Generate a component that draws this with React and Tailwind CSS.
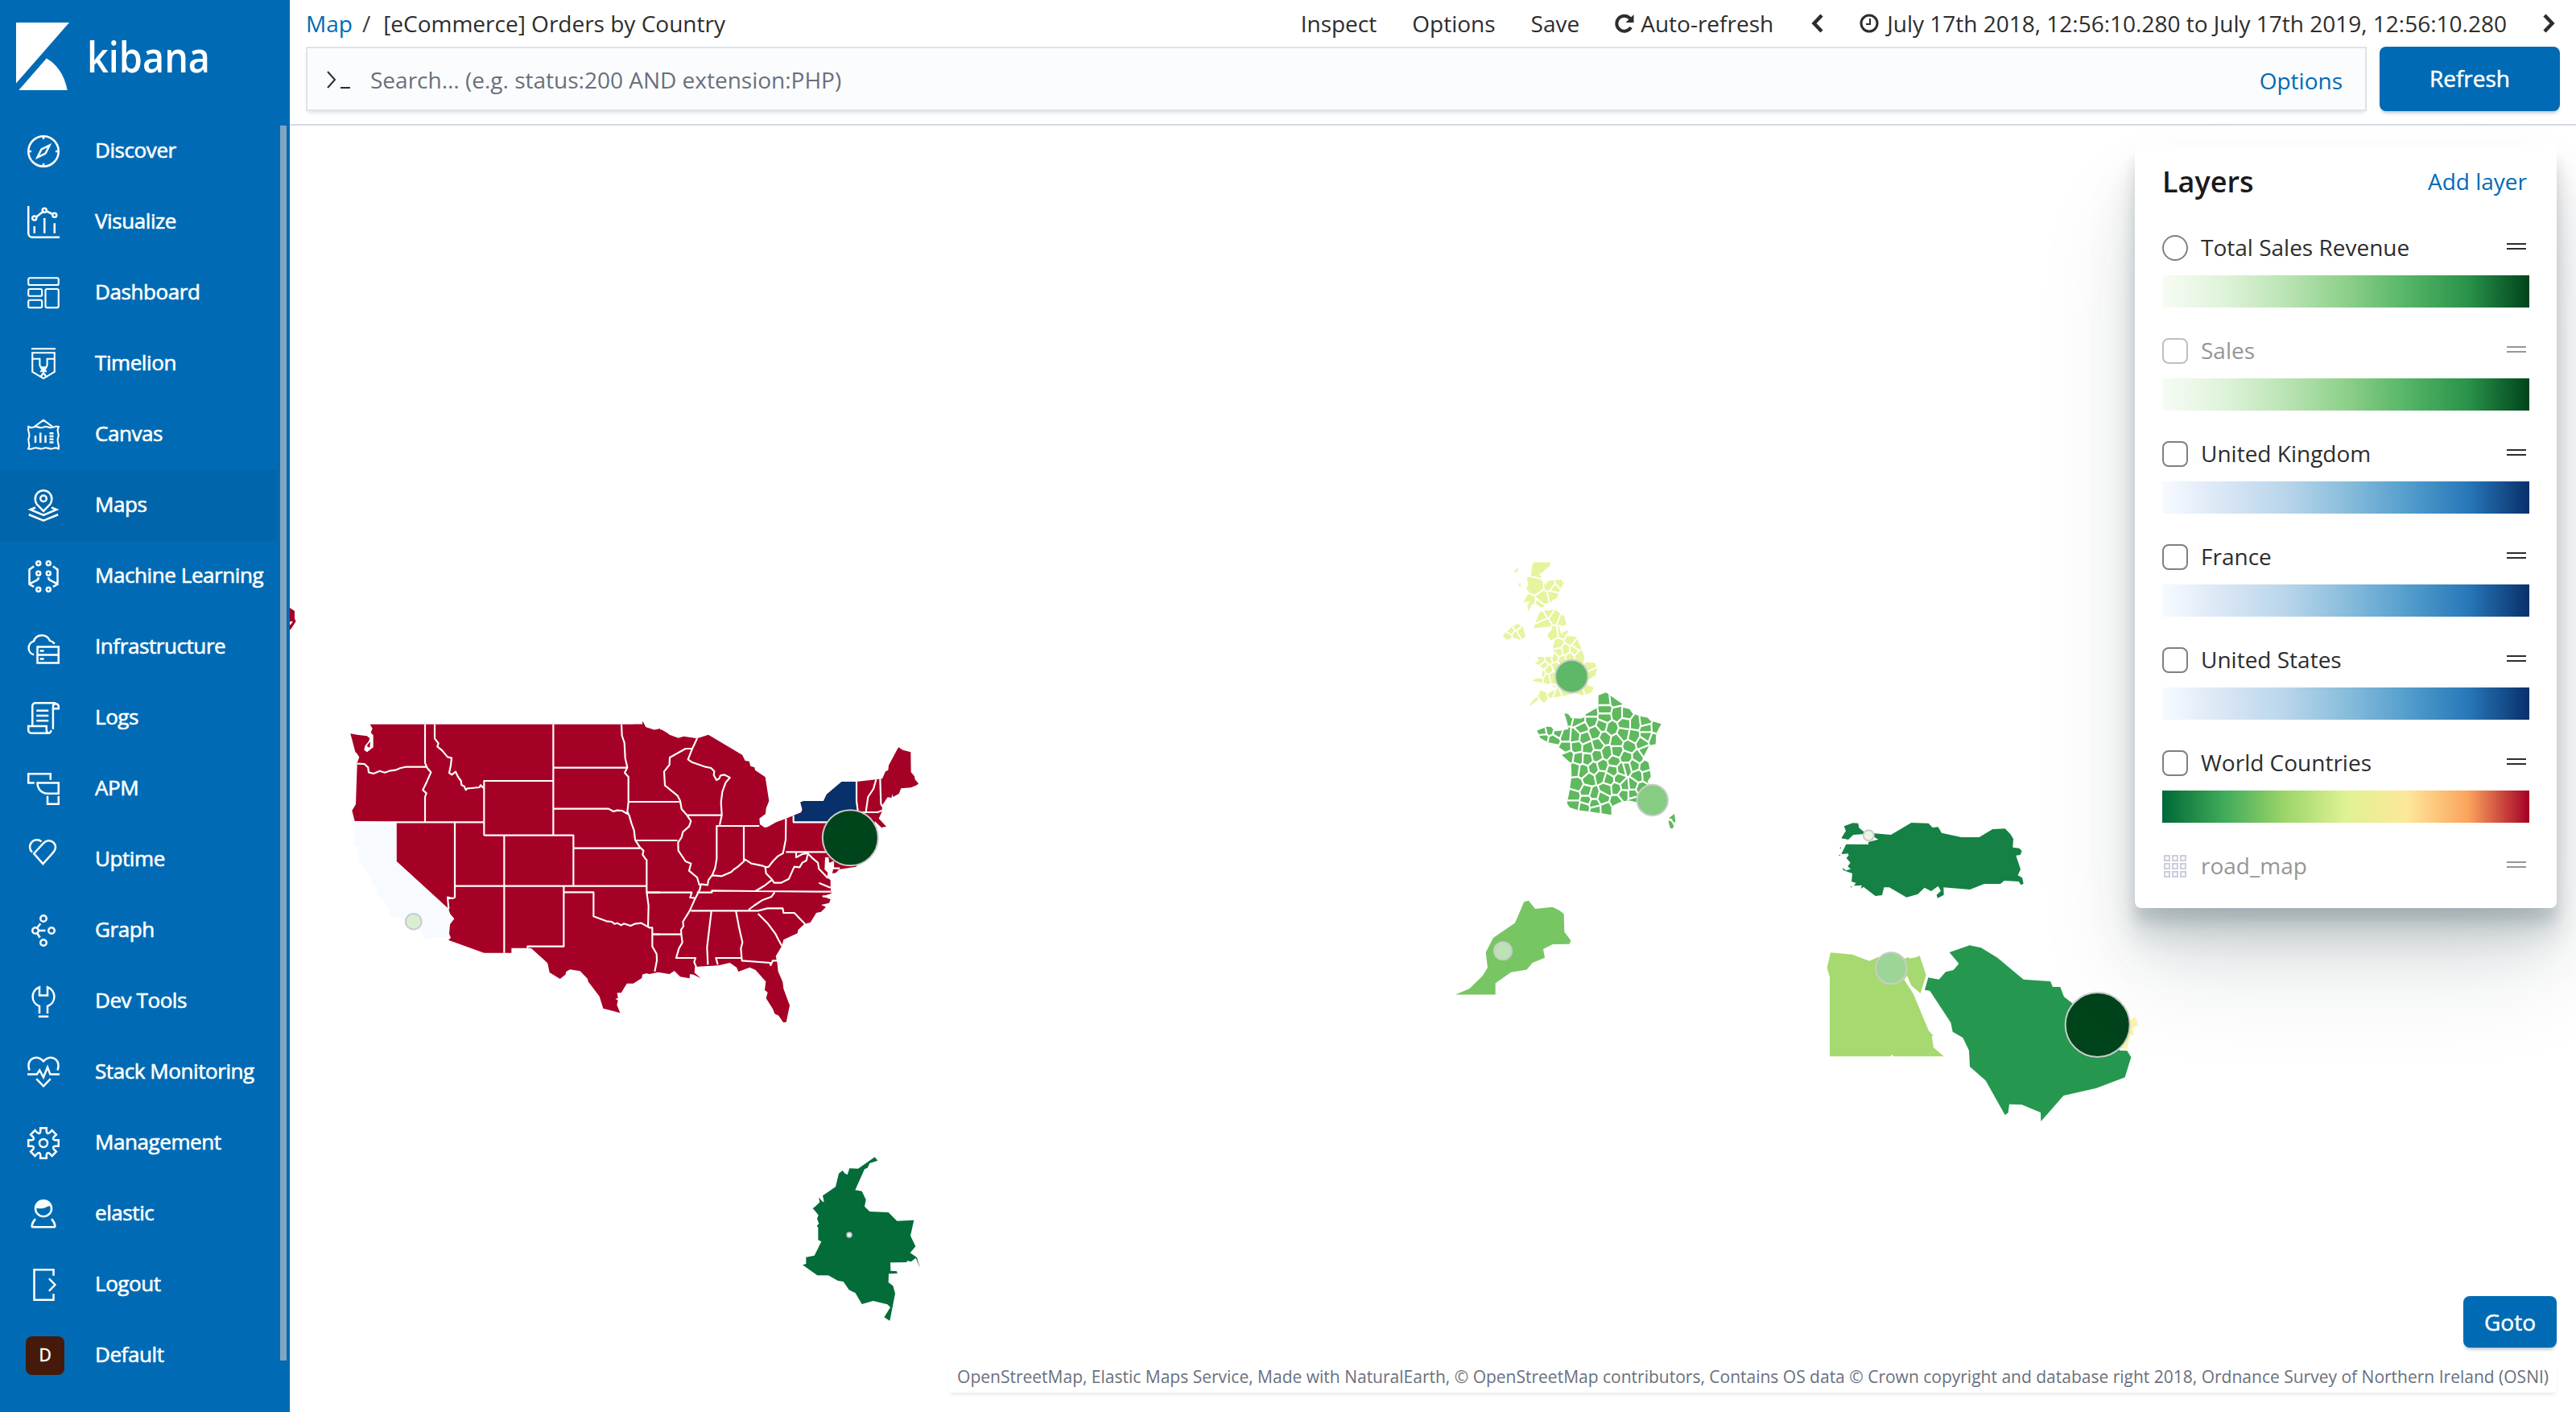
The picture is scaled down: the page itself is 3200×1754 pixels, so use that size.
import React from "react";

const FONT = "font-['Open_Sans','Noto_Sans',sans-serif]";

/* ---------- sidebar icons, 32 unit grid ---------- */

const gearPath = (() => {
  const pts = [];
  for (let i = 0; i < 8; i++) {
    const a = (i * Math.PI) / 4;
    const rot = (x, y) =>
      `${(16 + x * Math.cos(a) - y * Math.sin(a)).toFixed(2)} ${(16 + x * Math.sin(a) + y * Math.cos(a)).toFixed(2)}`;
    pts.push(`${i ? "L" : "M"}${rot(-3, -11.6)}L${rot(-3, -15)}L${rot(3, -15)}L${rot(3, -11.6)}`);
    const b = a + Math.PI / 8;
    const c = a + Math.PI / 4;
    const qx = 16 + 9.2 * Math.sin(b);
    const qy = 16 - 9.2 * Math.cos(b);
    const ex = 16 - 3 * Math.cos(c) + 11.6 * Math.sin(c);
    const ey = 16 - 3 * Math.sin(c) - 11.6 * Math.cos(c);
    pts.push(`Q${qx.toFixed(2)} ${qy.toFixed(2)} ${ex.toFixed(2)} ${ey.toFixed(2)}`);
  }
  return pts.join("") + "Z";
})();

const ICONS = {
  Discover: (
    <>
      <circle cx="16" cy="16" r="15" />
      <path d="M16 1v3M16 28v3M1 16h3M28 16h3M22 10l-8 4-4 8 8-4z" />
    </>
  ),
  Visualize: (
    <>
      <path d="M1 0v27a4 4 0 004 4h27M7 20v7M17 12v15M27 17v10M8.8 10.8l6.4-5M18.9 5l6.2 3" />
      <circle cx="7" cy="12" r="2" />
      <circle cx="17" cy="4.2" r="2" />
      <circle cx="27" cy="9" r="2" />
    </>
  ),
  Dashboard: (
    <g strokeWidth="1.7">
      <rect x="1" y="1" width="30" height="7" rx="1.5" />
      <rect x="1" y="12" width="13.5" height="7" rx="1.5" />
      <rect x="1" y="23" width="13.5" height="7.5" rx="1.5" />
      <rect x="18" y="12" width="13" height="18.5" rx="1.5" />
    </g>
  ),
  Timelion: (
    <g strokeWidth="1.7">
      <path d="M4 1h24M5 5h22v19l-11 6.5L5 24zM5 11h7.3v6.3l3.7 7 3.7-7V11H27M12.5 19.5h7M13 24l3-3 3 3M13 29l3-4 3 4" />
    </g>
  ),
  Canvas: (
    <g strokeWidth="1.7">
      <path d="M7 8l9-6.5L25 8M1 8q3 1.500 5 .5t5 0 5 0 5 0 5 0 5-.5q-1.500 3-.5 6t0 5 0 5 .5 6q-3-1.500-5-.5t-5 0-5 0-5 0-5 0-5 .5q1.500-3 .5-6t0-5 0-5-.5-6z" />
      <path strokeWidth="2" d="M8 17v7M13 14v10M18 16.500v7.500M22 14.500h4M22 17.500h4M22 20.500h4M22 23.500h4" />
    </g>
  ),
  Maps: (
    <>
      <path d="M16 21.5L9.500 14.800a8.200 8.200 0 01-1.700-5A8.200 8.200 0 0116 1a8.200 8.200 0 018.200 8.800 8.200 8.200 0 01-1.700 5z" />
      <circle cx="16" cy="9" r="3" />
      <path d="M8 18l-5 2 13 5.500L29 20l-5-2M1.500 25L16 31l14.500-6" />
    </>
  ),
  "Machine Learning": (
    <>
      <circle cx="11" cy="3" r="2" />
      <circle cx="21" cy="3" r="2" />
      <circle cx="11" cy="13" r="2" />
      <circle cx="21" cy="13" r="2" />
      <circle cx="11" cy="29" r="2" />
      <circle cx="21" cy="29" r="2" />
      <path d="M6.500 6L2 9.200v14.600l4.500 2.500M2 23.500l6-3q3-1 3.300-3.500M25.500 6L30 9.200v14.600l-4.500 2.500M30 23.500l-6-3q-3-1-3.300-3.500" />
    </>
  ),
  Infrastructure: (
    <path d="M6.500 23.500A7 7 0 016.300 10 8.500 8.500 0 0122.300 9.500Q25 10 27 12.500M10 15.500h21v16H10zM10 23.500h21M12.500 19.500h4M12.500 27.500h4" />
  ),
  Logs: (
    <path d="M5 23V4a3 3 0 013-3h20M23.500 28a2.700 2.700 0 01-3 3H4a3 3 0 01-3-3v-4h18v4a3 3 0 003 3M25.500 27V4a2.800 2.800 0 015.500 0v2.500h-5M9 8.500h12M9 13.500h12M9 18.500h12" />
  ),
  APM: <path d="M7 10H1V1h22v6M10 10h21v10.500H20C14 20.500 10 16 10 10zM20 23v8h11v-8" />,
  Uptime: (
    <path d="M6.500 9.800L16.200-.7a6.700 6.700 0 019.700-.5 6.700 6.700 0 010 9.700L15.500 20zM4.800 8.500A6.500 6.500 0 0114-2" />
  ),
  Graph: (
    <>
      <circle cx="16" cy="4" r="3" />
      <circle cx="8" cy="16" r="3" />
      <circle cx="24" cy="16" r="3" />
      <circle cx="16" cy="28" r="3" />
      <path d="M10 13l3-4M11 16h7M10 19l2.500 4" />
    </>
  ),
  "Dev Tools": <path d="M12 28v-7.300A10 10 0 0112 1.800V10h8V1.800a10 10 0 010 18.900V28M11 31h10" />,
  "Stack Monitoring": (
    <path d="M2 14Q-.5 7 4 3 10-1 16 5 22-1 28 3q4.500 4 2 11M0 18h9.500l2.700-4L16 21l4-10 2.700 7H32M9 22.500l7 7.300 7-7.300" />
  ),
  Management: (
    <>
      <path d={gearPath} />
      <circle cx="16" cy="16" r="4" />
    </>
  ),
  elastic: (
    <>
      <circle cx="16" cy="10.500" r="8" />
      <path d="M8 21Q5 24 4.500 28q0 1 1 1h21q1 0 1-1-.5-4-3.500-7" />
      <path fill="white" stroke="none" d="M7.500 10Q8.500 2 16 2q6 0 8 6-4 0-6 1.500-4 2-10.500.5z" />
    </>
  ),
  Logout: <path d="M26 7V1H6.800v30H26v-6M21.500 9.800l6 6.200-6 6.200" />,
};

const NAV = [
  "Discover", "Visualize", "Dashboard", "Timelion", "Canvas", "Maps",
  "Machine Learning", "Infrastructure", "Logs", "APM", "Uptime", "Graph",
  "Dev Tools", "Stack Monitoring", "Management", "elastic", "Logout", "Default",
];

function Sidebar() {
  return (
    <aside className="flex h-full w-[360px] shrink-0 flex-col bg-[#006bb4] text-white">
      <div className="flex h-36 shrink-0 items-start pl-5 pt-7">
        <svg width="66" height="84" viewBox="0 0 66 84" fill="white">
          <path d="M0 0h66L0 75.500zM3.300 84L37.800 44.500Q58 56 63.700 84z" />
        </svg>
        <span className="ml-[22px] mt-3 origin-left scale-x-[0.9] text-[52px] leading-[60px] font-semibold">
          kibana
        </span>
      </div>
      <div className="flex">
        <nav className="w-[344px]">
          {NAV.map((n) => (
            <a
              key={n}
              className={
                "flex h-[88px] items-center " + (n === "Maps" ? "bg-[#0065aa]" : "")
              }
            >
              {n === "Default" ? (
                <span className="ml-8 mr-[38px] flex size-12 items-center justify-center rounded-lg bg-[#461a0a] text-[21px] [-webkit-text-stroke:0.5px_white]">
                  D
                </span>
              ) : (
                <svg
                  className="ml-[34px] mr-11 size-10 overflow-visible"
                  viewBox="0 0 32 32"
                  fill="none"
                  stroke="white"
                  strokeWidth="2"
                >
                  {ICONS[n]}
                </svg>
              )}
              <span className="pb-1 text-[26px] tracking-[-0.42px] whitespace-nowrap [-webkit-text-stroke:0.6px_white]">
                {n}
              </span>
            </a>
          ))}
        </nav>
        <div className="ml-1 mt-3 h-[1534px] w-2 bg-[#80a5c1]" />
      </div>
    </aside>
  );
}

/* ---------- header ---------- */

function Header() {
  return (
    <header className="h-[156px] shrink-0 border-b-2 border-[#d3dae6] bg-white text-[28px] text-[#2d2d2d]">
      <div className="flex h-[58px] items-center pl-5 whitespace-nowrap">
        <a className="text-[#006bb4]">Map</a>
        <span className="mr-4 ml-3 text-[#3f3f3f]">/</span>
        <span>[eCommerce] Orders by Country</span>
        <div className="ml-auto flex items-center pr-6">
          <span className="mr-11">Inspect</span>
          <span className="mr-11">Options</span>
          <span className="mr-11">Save</span>
          <svg className="mr-2 size-6" viewBox="0 0 24 24" fill="none" stroke="currentColor" strokeWidth="4">
            <path d="M20 17A9.500 9.500 0 1119 6" />
            <path fill="currentColor" stroke="none" d="M23.500 1v10h-10z" />
          </svg>
          <span className="mr-[45px]">Auto-refresh</span>
          <svg className="mr-[42px] h-6 w-5" viewBox="0 0 20 24" fill="none" stroke="currentColor" strokeWidth="4.500">
            <path d="M15 2L5.500 12l9.500 10" />
          </svg>
          <svg className="mr-2.5 size-6" viewBox="0 0 24 24" fill="none" stroke="currentColor" strokeWidth="3">
            <circle cx="12" cy="12" r="10" />
            <path strokeWidth="2" d="M13 6v7H8" />
          </svg>
          <span className="mr-[42px]">July 17th 2018, 12:56:10.280 to July 17th 2019, 12:56:10.280</span>
          <svg className="h-6 w-5" viewBox="0 0 20 24" fill="none" stroke="currentColor" strokeWidth="4.500">
            <path d="M5 2l9.500 10L5 22" />
          </svg>
        </div>
      </div>
      <div className="flex gap-4 pl-5 pr-5">
        <div className="flex h-20 flex-1 items-center border-2 border-[#dfe2e6] bg-[#fbfcfd] px-6 shadow-[0_4px_4px_-2px_rgba(152,162,179,0.3)]">
          <svg className="mt-1 h-6 w-[30px]" viewBox="0 0 30 24" fill="none" stroke="#2d2d2d" strokeWidth="2">
            <path d="M1 1l9 10-9 10M17 21h12" />
          </svg>
          <span className="ml-6 pt-0.5 text-[#69707d]">Search... (e.g. status:200 AND extension:PHP)</span>
          <a className="mr-1 ml-auto pt-1 text-[#006bb4]">Options</a>
        </div>
        <button className="h-20 w-56 rounded-lg bg-[#006bb4] pb-0.5 text-white shadow-[0_4px_4px_-2px_rgba(54,97,126,0.4)] [-webkit-text-stroke:0.5px_white]">
          Refresh
        </button>
      </div>
    </header>
  );
}

/* ---------- map shapes ---------- */

// Voronoi cell outlines, used for the department and district borders.
function cellPath(sites) {
  let out = "";
  sites.forEach(([sx, sy], i) => {
    let poly = [[sx - 120, sy - 120], [sx + 120, sy - 120], [sx + 120, sy + 120], [sx - 120, sy + 120]];
    sites.forEach(([tx, ty], j) => {
      if (i === j) return;
      const mx = (sx + tx) / 2, my = (sy + ty) / 2, nx = tx - sx, ny = ty - sy;
      const side = ([x, y]) => (x - mx) * nx + (y - my) * ny;
      const next = [];
      poly.forEach((p, k) => {
        const q = poly[(k + 1) % poly.length];
        const a = side(p), b = side(q);
        if (a <= 0) next.push(p);
        if ((a < 0 && b > 0) || (a > 0 && b < 0)) {
          const t = a / (a - b);
          next.push([p[0] + t * (q[0] - p[0]), p[1] + t * (q[1] - p[1])]);
        }
      });
      poly = next;
    });
    if (poly.length) out += "M" + poly.map((p) => `${p[0].toFixed(1)} ${p[1].toFixed(1)}`).join("L") + "Z";
  });
  return out;
}

const FR = [[640,515],[680,510],[640,545],[690,560],[720,560],[640,570],[755,590],[790,585],[715,590],[665,608],[630,598],[590,582],[545,582],[500,570],[555,605],[605,622],[640,640],[685,650],[710,627],[748,635],[795,608],[835,605],[795,632],[825,645],[780,657],[732,668],[790,685],[765,705],[720,705],[685,685],[648,690],[675,718],[612,700],[615,662],[578,673],[565,640],[530,635],[495,632],[450,648],[410,640],[435,612],[408,618],[465,620],[535,670],[495,672],[505,702],[542,708],[575,710],[600,742],[560,750],[530,745],[630,733],[670,750],[705,745],[722,740],[750,732],[790,737],[798,765],[763,768],[745,797],[715,800],[695,778],[655,778],[625,768],[582,778],[535,797],[645,812],[685,808],[712,830],[745,830],[775,810],[600,830],[632,840],[685,855],[572,848],[525,835],[572,820],[525,865],[565,873],[605,882],[645,880],[750,850],[600,860],[590,555]];
const UK = [[395,75],[385,130],[440,125],[470,120],[455,137],[410,172],[450,162],[365,190],[395,195],[415,258],[455,232],[485,245],[450,290],[405,232],[430,215],[480,285],[515,310],[465,325],[535,328],[545,368],[405,380],[430,375],[455,370],[480,378],[510,368],[495,345],[590,400],[598,420],[430,410],[405,425],[445,435],[395,445],[410,495],[380,520],[440,485],[465,495],[490,485],[545,488],[580,480],[470,352],[525,345],[460,400],[415,395],[425,440],[280,300],[290,278],[310,265],[325,285],[310,295]];

const FR_D = "M490 557L505 560 515 573 550 575 568 570 570 560 610 540 617 540 617 497 645 487 705 525 705 537 732 543 745 558 775 568 800 572 810 582 851 593 832 625 830 660 806 665 780 712 803 722 808 745 812 770 800 785 806 800 815 830 770 858 735 850 705 852 675 865 665 870 665 898 630 893 540 882 510 873 500 860 510 815 517 767 515 725 480 697 500 690 468 670 470 662 430 655 400 640 395 628 388 615 425 602 440 603 455 618 480 615 505 610 500 585Z";
const UK_D = "M370 60L375 50 438 50 436 62 395 92 405 98 400 108 420 125 430 112 478 108 487 120 470 150 462 170 445 178 435 190 405 203 385 190 370 190 355 215 352 195 362 180 335 185 360 150 348 140 355 125 350 100 365 98ZM400 215L455 208 490 232 497 258 470 270 478 290 500 278 505 285 490 297 535 300 553 340 565 370 560 385 605 388 612 410 605 430 580 445 560 455 600 472 590 488 560 497 530 490 480 500 455 503 430 505 415 522 395 510 357 535 372 515 395 495 400 480 430 490 460 475 440 460 370 448 385 440 405 440 410 405 380 388 395 382 390 368 450 368 448 330 455 315 438 312 427 295 445 272 440 265 375 272 385 245ZM260 297L290 270 315 257 335 265 345 300 325 310 295 302 278 311Z";

function UnitedStates() {
  return (
    <g transform="translate(420 880) scale(.33333)">
      <g fill="#a50026">
        <path d="M119 59L1135 59 1135 47 1146 70 1178 80 1200 75 1200 982 1160 990 1135 983 1132 1005 1100 1025 1076 1025 1055 1060 1040 1060 1043 1080 1033 1082 1043 1088 1039 1105 1051 1135 988 1118 974 1073 932 1018 930 1008 902 979 864 973 850 981 847 992 827 1008 788 984 781 950 774 943 719 893 646 893 646 911 544 911 411 863 420 855 414 840 417 805 433 784 417 765 412 747 218 570 218 424 62 420 52 381 66 357 71 210 70 205 79 182 72 170 64 162 46 94 70 98 108 103 118 112 114 122 100 140 97 155 108 163 131 145 131 100 122 90 128 75Z" />
        <path d="M110 135L120 124 118 146 108 142Z" />
        <path transform="translate(1080 0)" d="M20 59L55 59 55 47 66 70 98 80 125 79 148 92 155 98 188 110 208 104 258 112 300 98 426 173 437 195 452 197 457 215 472 220 474 230 512 256 526 345 515 372 513 393 490 410 492 432 510 444 521 442 553 424 588 411 645 388 650 376 643 350 655 345 729 345 741 320 797 273 852 273 925 265 948 262 960 235 970 230 972 212 1008 145 1025 155 1054 163 1055 238 1068 253 1070 265 1083 280 1077 286 1055 295 1018 298 1010 318 988 330 987 318 982 333 968 331 947 362 948 382 935 410 963 440 945 444 920 420 915 520 850 590 787 600 775 613 762 615 765 598 765 570 750 575 748 555 735 555 733 600 745 612 742 630 755 640 755 665 758 690 725 700 755 712 750 725 720 732 738 740 720 758 702 762 680 798 658 803 634 826 632 838 580 862 574 885 551 923 556 945 560 980 577 1020 580 1045 603 1107 590 1169 579 1170 562 1145 547 1138 540 1120 515 1080 521 1058 510 1050 514 1018 476 975 454 965 412 981 405 965 380 948 338 958 250 963 248 985 272 1006 245 992 231 990 230 1006 195 1000 173 978 155 990 104 982 80 985 20 1000Z" />
      </g>
      <path fill="#f7fbff" d="M64 428L217 428 217 570 411 748 416 765 431 784 415 805 412 840 418 850 320 859 310 835 285 822 250 795 235 782 195 777 190 745 165 715 147 695 143 665 127 655 122 625 108 618 104 600 78 570 73 518 54 505 62 480 60 455 66 445Z" />
      <path transform="translate(1080 0)" fill="#08306b" d="M617 422V400L650 386 650 376 643 350 655 345 729 345 741 320 797 273 852 273V345L857 380V422Z" />
      <g fill="none" stroke="#fff" strokeWidth="6.5" strokeLinejoin="round">
        <path d="M71 206L98 207 112 220 114 238 132 243 155 233 174 239 195 232 213 230 233 222 253 218 328 218M324 60V203L332 222 346 238 331 272 316 304 329 316 324 330V424M360 60V112L374 130 370 142 388 157 408 181 423 185 420 212 414 240 424 247 438 236 447 255 458 270 460 285 470 290 476 304 482 298 497 297 527 294 531 286 544 298M544 473V270H802M802 60V473M544 473H877V662M62 424H544M435 424V704L425 708 408 704 412 747M619 473V911M435 662H1150M804 221H1076M804 374H1008L1026 384 1040 380 1058 381 1080 394M1056 60L1058 102 1067 128 1070 185 1078 220 1068 240 1082 255V350L1078 385 1085 400 1094 430 1103 455 1107 490 1125 518 1138 530 1135 545 1145 560 1150 565V685L1157 735 1155 815M1080 348H1200M877 521H1125M1110 492H1200M841 662V887H706V893M841 685H952V775L980 785 1000 793 1020 795 1030 803 1040 800 1055 808 1065 802 1090 810 1105 803 1130 800 1160 817H1171V887L1187 915 1188 940 1180 980M1150 686H1200M1171 842H1200" />
        <path transform="translate(1080 0)" d="M258 112L240 150 224 190 238 200 290 218 310 222 322 235 320 248 330 267 340 262 345 250 360 247 380 258 365 275 352 310 347 350 350 398 342 434M240 150H215L156 183 155 210 135 235 138 287 160 305 185 325 195 345 200 375 218 395 235 420 228 440 205 460 200 480 187 500 188 530 215 570 235 578 228 605 258 630 267 660M0 348H195M222 398H348M30 492H185M432 436V570M490 438H331V560L325 595 315 620 300 640 297 658 272 655 268 675M315 622L350 625 385 610 395 600 410 590 432 570 436 563 445 568 460 578 500 586 515 592 525 590 540 570 560 550 578 540 588 490 589 411M512 592L515 615 535 635 545 650 570 650 600 635 620 590 640 592 650 575 665 567 670 545M589 535H740M617 400V424H750M627 537V555L650 543 670 540 690 560 708 575 712 598 745 632M535 640L510 660 475 681M257 686H313V679L480 681 757 683M70 686H238L232 705 248 706M268 675L250 710 230 755 205 795 207 812 198 825 200 850 203 872 190 895 180 930H252L247 945 255 965M235 754H485L520 745H577L580 762H620L660 803M547 685L535 702 500 715 470 735 450 750M311 757L295 890 298 955M403 757L415 820 427 872 421 895 425 940 530 948 532 957 540 940H555M425 930H328L335 955M485 765L520 800 550 840 560 860 574 885M92 842H200M852 273V345L857 383M925 265L915 300 895 330 887 385M940 262L943 355 948 365M860 387H930L948 380M765 570V596H790M712 650L755 668M725 700L760 702" />
      </g>
    </g>
  );
}

const POINTS = [
  [513.7, 1144.7, 9.8, "#d9efd4"],
  [1056.3, 1040.7, 34.5, "#00441b"],
  [1055, 1534, 2.7, "#ffffff"],
  [1952.3, 840.2, 20.2, "#5db868"],
  [2052.7, 994, 19.2, "#86cc83"],
  [1867, 1181.2, 11, "#bbe3b5"],
  [2321.3, 1037.7, 6.5, "#e9f5e5"],
  [2349.3, 1202.7, 19.4, "#9bd696"],
  [2605.7, 1273, 40, "#00441b"],
];

function MapCanvas() {
  return (
    <svg className="block h-full w-full" viewBox="360 156 2840 1598">
      <path fill="#a50026" d="M360 755L366 759 366 768 367.500 772 361 782 360 782z" />
      <path fill="#fff" d="M360 772h4l-3 4h-1z" />
      <UnitedStates />

      <g transform="translate(1780 680) scale(.33333 .3699)">
        <clipPath id="fr"><path d={FR_D} /></clipPath>
        <clipPath id="uk"><path d={UK_D} /></clipPath>
        <path fill="#e6f49d" d={UK_D} />
        <path fill="#e6f49d" d="M303 78L320 68 314 82 305 84zM318 120L328 122 325 135z" />
        <path clipPath="url(#uk)" fill="none" stroke="#fff" strokeWidth="5.500" d={cellPath(UK)} />
        <path fill="#5fb95e" d={FR_D} />
        <path clipPath="url(#fr)" fill="none" stroke="#fff" strokeWidth="6.500" strokeLinejoin="round" d={cellPath(FR)} />
        <path fill="#5fb95e" d="M879 909L900 895 904 920 898 925 890 912zM878 916L890 922 898 935 893 945 885 943 880 930z" />
        <path fill="#78c563" d="M84 1502L136 1482 185 1439 204 1411 197 1360 225 1311 306 1261 340 1190 357 1186 381 1214 446 1208 472 1219 488 1231 490 1291 514 1320 509 1332 447 1333 411 1349 417 1378 371 1395 350 1418 291 1427 233 1463 233 1502z" />
      </g>

      <g transform="translate(2220 980) scale(.33333)">
        <path fill="#158144" d="M212 139L245 127 265 128 268 145 289 162 325 166 387 171 463 126 527 128 542 144 563 142 576 164 649 180 716 180 766 150 812 148 832 168 843 186 841 218 865 221 875 231 869 246 853 248 870 299 860 322 876 331 881 353 871 358 864 345 809 342 795 354 735 354 681 375 583 367 584 395 561 407 557 395 573 380 563 362 537 381 512 368 487 392 445 404 381 367 361 367 354 396 329 399 285 365 275 372 278 359 248 361 257 351 240 345 243 315 218 306 209 303 208 293 218 304 237 299 226 288 236 275 221 258 229 248 228 241 202 243 220 206 303 207 303 198 340 188 325 180 290 168 247 171 228 189 202 184 219 156z" />
        <path fill="#a6d96f" d="M162 610L243 617 307 641 340 626 440 632 452 626 455 632 482 627 494 621 518 694 497 762 463 733 447 695 436 710 470 763 528 902 546 920 539 922 546 964 584 997 398 997 391 990 386 997 159 997 159 702 149 666z" />
        <path fill="#26974f" d="M680 583L723 592 784 629 881 710 981 717 990 738 1018 738 1032 775 1062 798 1240 975 1267 976 1282 1000 1259 1075 1152 1115 1030 1143 946 1239 945 1206 875 1177 828 1175 824 1207 812 1215 740 1087 681 1035 678 975 655 927 617 905 610 871 532 752 513 749 526 703 566 710 591 682 620 675 640 651 605 609z" />
        <path fill="#fff3ac" d="M1262 875L1298 848 1309 882 1295 885 1288 898 1294 914 1278 920 1267 970 1240 966z" />
        <path fill="#158144" d="M197 218h4v4h-4zM194 245h4v4h-4zM237 363h4v4h-4z" />
      </g>

      <path
        transform="translate(960 1410) scale(.33333)"
        fill="#046c39"
        d="M380 82L391 95 361 105 353 122 342 127 307 205 332 209 347 241 342 266 361 285 431 288 463 320 526 317 513 375 532 415 512 439 537 456 549 495 533 458 515 472 500 468 500 474 438 475 439 506 461 507 465 515 432 517 431 549 448 562 456 590 436 692 415 679 438 642 427 631 374 618 332 630 308 589 284 577 263 546 243 543 207 523 166 523 111 484 124 480 124 455 155 449 181 397 169 391 169 345 164 338 172 330 165 312 170 298 149 273 158 266 175 250 171 232 186 249 191 248 186 226 234 193 246 143 260 132 267 142 278 148 286 124 318 125z"
      />

      {POINTS.map(([cx, cy, r, fill]) => (
        <circle key={cx} cx={cx} cy={cy} r={r} fill={fill} stroke="#cbcbcb" strokeWidth="2" />
      ))}
    </svg>
  );
}

/* ---------- layer panel ---------- */

const GREENS = "bg-[linear-gradient(to_right,#f7fcf5,#dff3da,#bbe4b4,#8ed08b,#55b567,#2a924a,#00441b)]";
const BLUES = "bg-[linear-gradient(to_right,#f7fbff,#d9e6f5,#bad6eb,#89bddc,#549ecd,#2878b9,#08306b)]";
const WORLD = "bg-[linear-gradient(to_right,#006837,#3faa5a,#9cd569,#dff293,#fee79a,#fba35c,#a50026)]";

const LAYERS = [
  { name: "Total Sales Revenue", kind: "circle", ramp: GREENS },
  { name: "Sales", kind: "box", ramp: GREENS, off: true },
  { name: "United Kingdom", kind: "box", ramp: BLUES },
  { name: "France", kind: "box", ramp: BLUES },
  { name: "United States", kind: "box", ramp: BLUES },
  { name: "World Countries", kind: "box", ramp: WORLD },
  { name: "road_map", kind: "grid", off: true },
];

function LayerMark({ kind, off }) {
  if (kind === "grid") {
    return (
      <svg className="size-8" viewBox="0 0 32 32" fill="none" stroke="#c9ced9" strokeWidth="2">
        {[3, 13, 23].map((y) => [3, 13, 23].map((x) => <rect key={`${x}-${y}`} x={x} y={y} width="6" height="6" />))}
      </svg>
    );
  }
  return (
    <span
      className={
        "size-8 border-2 " +
        (kind === "circle" ? "rounded-full " : "rounded-lg ") +
        (off ? "border-[#bfbfbf]" : "border-[#808080]")
      }
    />
  );
}

function LayerPanel() {
  return (
    <section className="absolute right-6 top-6 h-[948px] w-[524px] rounded-lg bg-white px-[34px] shadow-[0_80px_128px_rgba(0,42,50,0.1),0_48px_64px_rgba(0,42,50,0.1),0_32px_32px_rgba(0,42,50,0.1),0_16px_16px_rgba(0,42,50,0.12)]">
      <div className="flex h-[92px] items-center justify-between">
        <h2 className="text-[36px] font-semibold text-[#1a1a1a]">Layers</h2>
        <a className="pr-[3px] pb-0.5 text-[28px] text-[#006bb4]">Add layer</a>
      </div>
      {LAYERS.map((l) => (
        <div key={l.name} className="h-32 pt-3">
          <div className="flex h-[58px] items-start pt-2">
            <LayerMark kind={l.kind} off={l.off} />
            <span
              className={
                "ml-4 text-[28px] leading-[30px] whitespace-nowrap " + (l.off ? "text-[#969696]" : "text-[#2d2d2d]")
              }
            >
              {l.name}
            </span>
            <span className={"mr-1 ml-auto mt-2.5 h-2 w-6 border-y-2 " + (l.off ? "border-[#969696]" : "border-[#2d2d2d]")} />
          </div>
          {l.ramp && <div className={"h-10 " + l.ramp} />}
        </div>
      ))}
    </section>
  );
}

export default function App() {
  return (
    <div className={"flex h-[1754px] w-[3200px] overflow-hidden bg-white " + FONT}>
      <Sidebar />
      <div className="flex min-w-0 flex-1 flex-col">
        <Header />
        <main className="relative min-h-0 flex-1">
          <MapCanvas />
          <LayerPanel />
          <button className="absolute right-6 bottom-20 h-16 w-[116px] rounded-lg bg-[#006bb4] text-[28px] text-white shadow-[0_4px_4px_-2px_rgba(54,97,126,0.4)] [-webkit-text-stroke:0.5px_white]">
            Goto
          </button>
          <p className="absolute right-6 bottom-6 rounded px-2.5 text-[21px] leading-[40px] whitespace-nowrap text-[#69707d] shadow-[0_4px_4px_-2px_rgba(152,162,179,0.3)]">
            OpenStreetMap, Elastic Maps Service, Made with NaturalEarth, © OpenStreetMap contributors, Contains OS data © Crown copyright and database right 2018, Ordnance Survey of Northern Ireland (OSNI)
          </p>
        </main>
      </div>
    </div>
  );
}
